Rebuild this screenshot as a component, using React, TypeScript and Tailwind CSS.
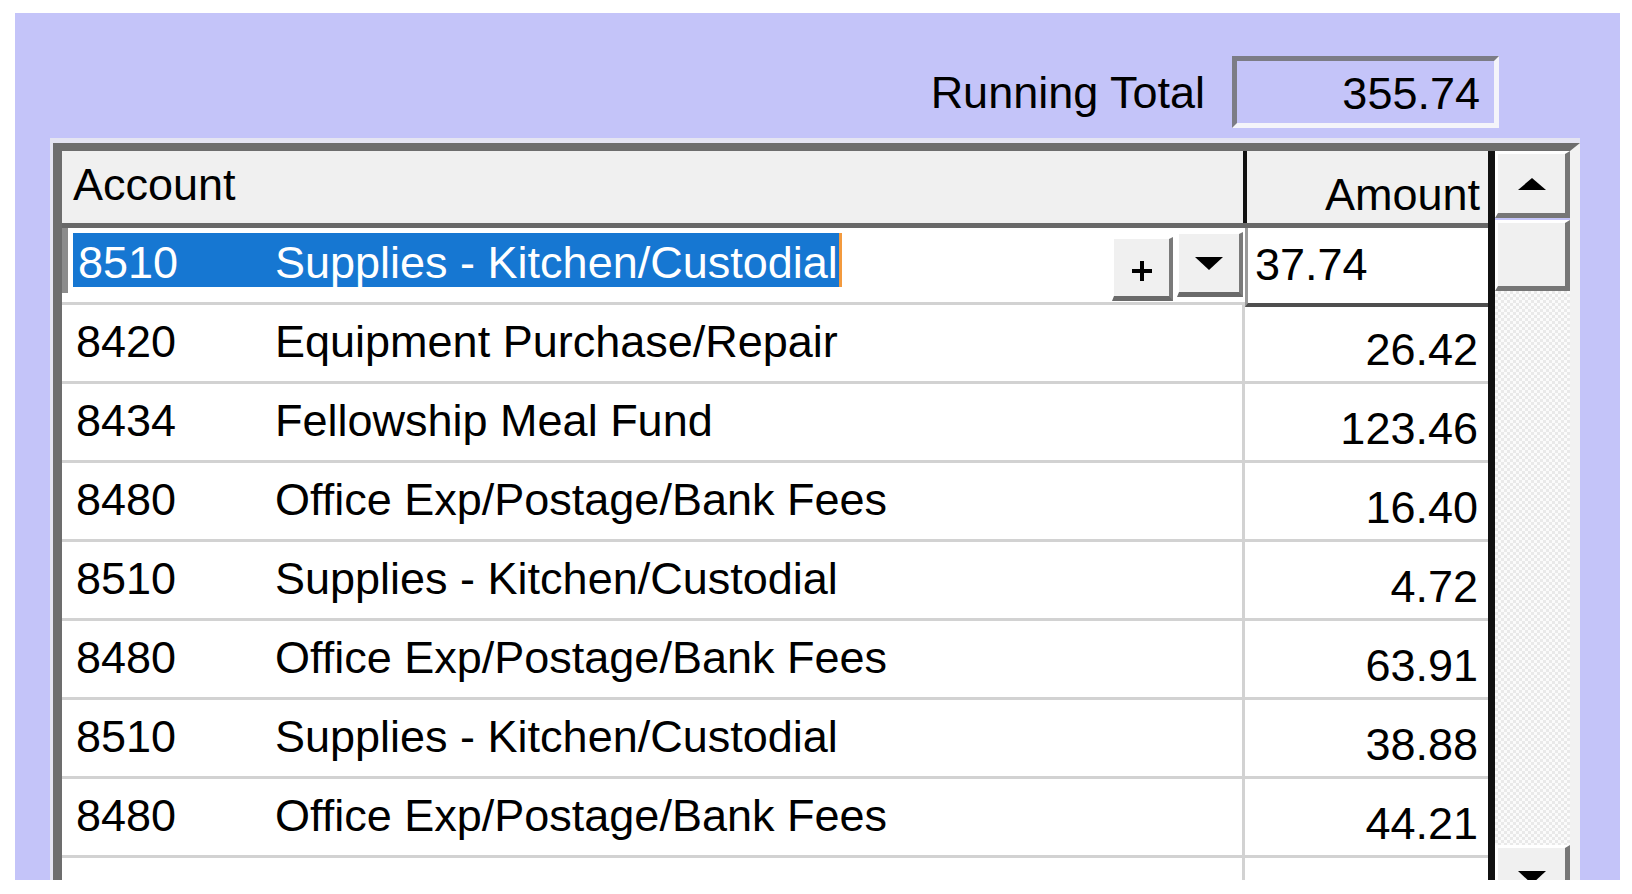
import React from "react";

const rows: [string, string, string][] = [
  ["8420", "Equipment Purchase/Repair", "26.42"],
  ["8434", "Fellowship Meal Fund", "123.46"],
  ["8480", "Office Exp/Postage/Bank Fees", "16.40"],
  ["8510", "Supplies - Kitchen/Custodial", "4.72"],
  ["8480", "Office Exp/Postage/Bank Fees", "63.91"],
  ["8510", "Supplies - Kitchen/Custodial", "38.88"],
  ["8480", "Office Exp/Postage/Bank Fees", "44.21"],
  ["", "", ""],
];

function TriUp() {
  return (
    <svg width="30" height="14" viewBox="0 0 30 14">
      <polygon points="15,1 29,13 1,13" fill="#000" />
    </svg>
  );
}
function TriDown() {
  return (
    <svg width="30" height="15" viewBox="0 0 30 15">
      <polygon points="1,1 29,1 15,14" fill="#000" />
    </svg>
  );
}

export default function App() {
  return (
    <div className="w-[1632px] h-[894px] bg-white overflow-hidden pt-[13px] pl-[15px] font-['Liberation_Sans',Arial,sans-serif] text-[45px] leading-none text-black">
      <div className="w-[1605px] h-[867px] bg-[#c4c4f9] overflow-hidden flex flex-col">
        {/* Running total */}
        <div className="h-[125px] shrink-0 flex items-start justify-end pr-[121px] pt-[43px]">
          <div className="h-[72px] flex items-center mr-[27px]">
            <span>Running Total</span>
          </div>
          <div className="w-[267px] h-[72px] border-t-[5px] border-l-[5px] border-[#7c7c86] border-r-[5px] border-b-[5px] border-r-[#f4f4fa] border-b-[#f4f4fa] flex items-center justify-end pr-[14px] pt-[2px]">
            <span>355.74</span>
          </div>
        </div>

        {/* Grid */}
        <div className="ml-[35px] w-[1530px] border-t-[5px] border-l-[3px] border-[#e4e4f2]">
          <div className="flex border-t-[8px] border-l-[9px] border-[#6d6d6d] border-r-[10px] border-r-[#f2f2f2]">
            {/* table */}
            <div className="w-[1426px] flex flex-col">
              {/* header */}
              <div className="flex h-[72px] bg-[#f0f0f0]">
                <div className="w-[1185px] border-r-[4px] border-[#111] pl-[11px] pt-[11px]">
                  Account
                </div>
                <div className="flex-1 text-right pr-[8px] pt-[21px]">Amount</div>
              </div>
              <div className="h-[5px] bg-[#686868]" />

              {/* edit row */}
              <div className="flex h-[77px]">
                <div className="w-[1183px] flex border-b-[3px] border-[#d2d2d2] bg-white">
                  <div className="w-[6px] h-[65px] bg-[#8c8c8c]" />
                  <div className="flex h-[54px] mt-[5px] ml-[5px] bg-[#1677d2] text-white">
                    <div className="flex pl-[5px] pt-[7px]">
                      <span className="w-[197px]">8510</span>
                      <span>Supplies - Kitchen/Custodial</span>
                    </div>
                    <div className="w-[3px] ml-[1px] bg-[#f39a3e]" />
                  </div>
                  <div className="flex-1" />
                  <div className="flex items-start mt-[4px] mr-[2px]">
                    <div className="w-[61px] h-[64px] mt-[5px] bg-[#f0f0f0] border-t-[2px] border-l-[2px] border-white border-r-[4px] border-b-[5px] border-r-[#7a7a7a] border-b-[#6a6a6a] flex items-center justify-center pt-[6px]">
                      <svg width="24" height="24" viewBox="0 0 24 24">
                        <rect x="10" y="2" width="4" height="20" fill="#000" />
                        <rect x="2" y="10" width="20" height="4" fill="#000" />
                      </svg>
                    </div>
                    <div className="w-[66px] h-[65px] ml-[4px] bg-[#f0f0f0] border-t-[2px] border-l-[2px] border-white border-r-[4px] border-b-[5px] border-r-[#7a7a7a] border-b-[#6a6a6a] flex items-center justify-center">
                      <TriDown />
                    </div>
                  </div>
                </div>
                <div className="w-[243px] h-[79px] mb-[-2px] relative z-10 bg-white border-l-[3px] border-l-[#9a9a9a] border-b-[4px] border-b-[#4e4e4e] pl-[7px] pt-[14px]">
                  37.74
                </div>
              </div>

              {rows.map((r, i) => (
                <div key={i} className="flex h-[79px] shrink-0 border-b-[3px] border-[#d2d2d2] bg-white">
                  <div className="w-[1183px] border-r-[3px] border-[#d2d2d2] flex pl-[14px] pt-[14px]">
                    <span className="w-[199px]">{r[0]}</span>
                    <span>{r[1]}</span>
                  </div>
                  <div className="flex-1 text-right pr-[10px] pt-[22px]">{r[2]}</div>
                </div>
              ))}
            </div>

            {/* black divider */}
            <div className="w-[7px] bg-[#111] self-stretch" />

            {/* scrollbar */}
            <div className="w-[75px] h-[760px] flex flex-col">
              <div className="h-[67px] bg-[#f0f0f0] border-t-[3px] border-l-[3px] border-white border-r-[5px] border-b-[5px] border-r-[#767676] border-b-[#767676] flex items-center justify-center">
                <TriUp />
              </div>
              <div className="h-[71px] mt-[2px] bg-[#f0f0f0] border-t-[3px] border-l-[3px] border-white border-r-[5px] border-b-[5px] border-r-[#767676] border-b-[#767676]" />
              <div className="flex-1 bg-[repeating-conic-gradient(#e9e9e9_0_25%,#fbfbfb_0_50%)] bg-[length:6px_6px]" />
              <div className="h-[66px] bg-[#f0f0f0] border-t-[3px] border-l-[3px] border-white border-r-[5px] border-b-[5px] border-r-[#767676] border-b-[#767676] flex items-center justify-center">
                <TriDown />
              </div>
            </div>
          </div>
        </div>
      </div>
    </div>
  );
}
